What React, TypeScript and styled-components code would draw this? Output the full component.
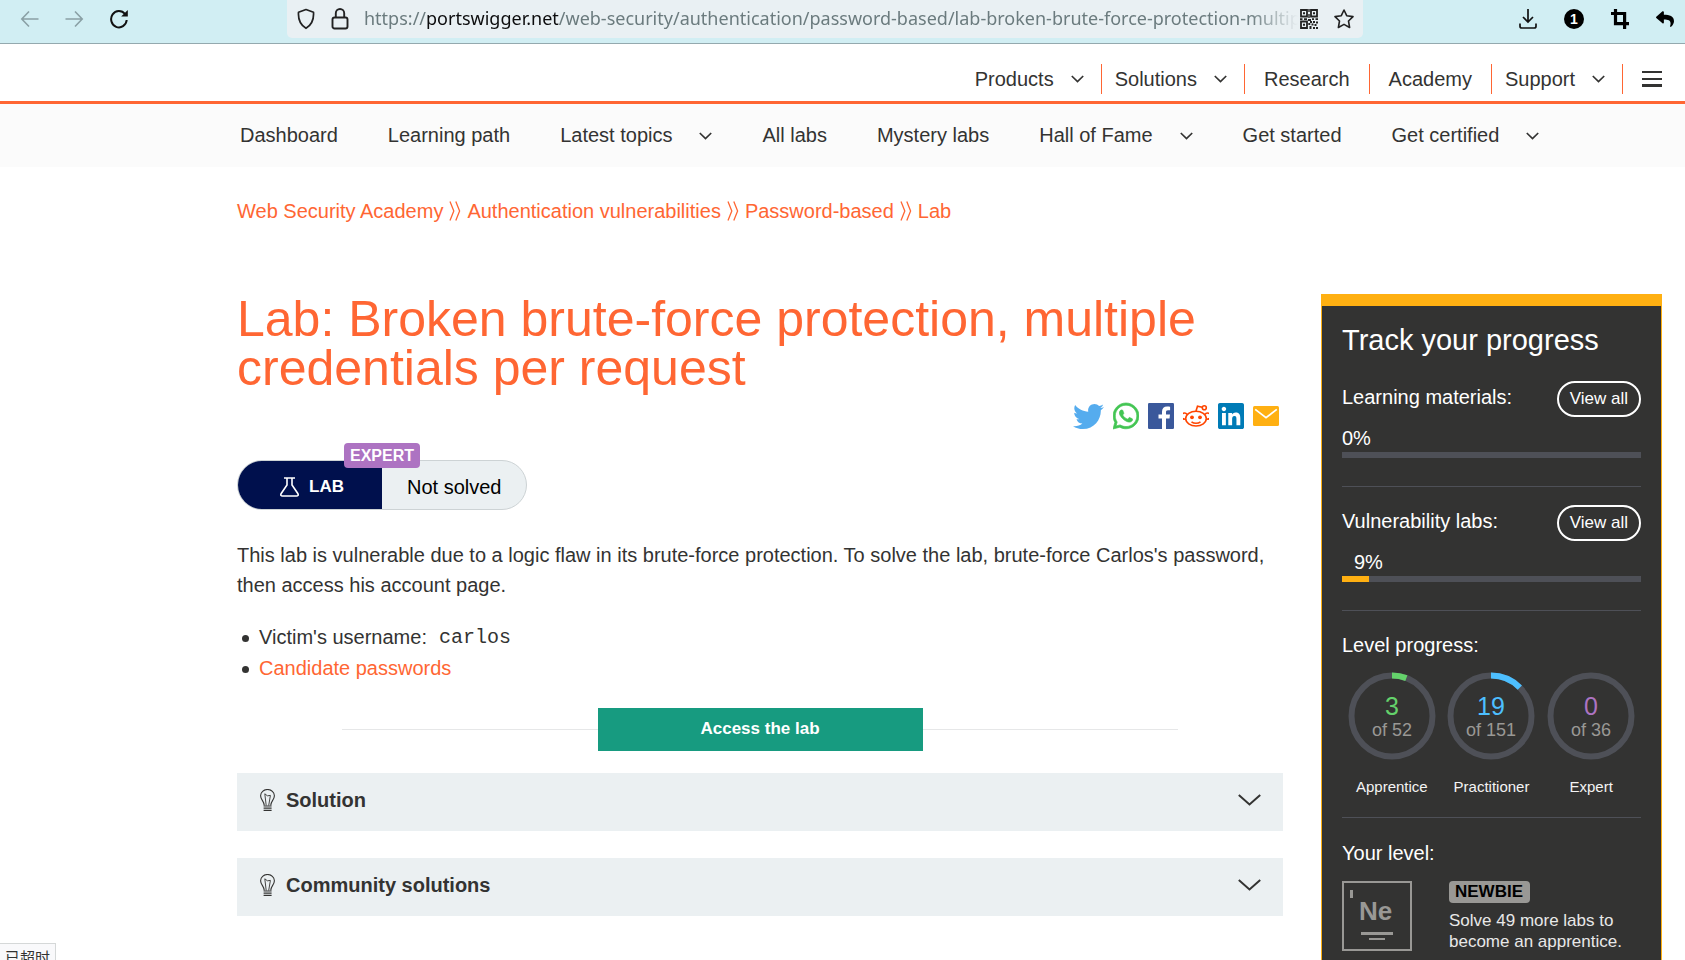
import React from "react";
import styled, { createGlobalStyle } from "styled-components";
import { FaTwitter, FaWhatsapp, FaLinkedin, FaReply } from "react-icons/fa";

const ORANGE = "#ff6633";
const AMBER = "#ffb012";
const INK = "#333332";
const PALE = "#ebf0f2";
const TRACK = "#4e5057";

const GlobalStyle = createGlobalStyle`
  *, *::before, *::after { box-sizing: border-box; }
  html, body, #root { height: 100%; }
  body {
    margin: 0;
    overflow: hidden;
    background: #fff;
    color: ${INK};
    font-family: "Liberation Sans", Arial, sans-serif;
    font-size: 20px;
  }
  a { color: inherit; text-decoration: none; }
  button { font: inherit; color: inherit; cursor: pointer; }
  svg { display: block; flex: none; }
  h1, h2, h3, p, ul { margin: 0; padding: 0; font-weight: 400; }
`;

const Page = styled.div`
  display: flex;
  flex-direction: column;
  min-height: 100%;
`;

/* Browser chrome */

const BrowserBar = styled.div`
  display: flex;
  height: 44px;
  padding: 0 11px 0 20px;
  background: #d1eef3;
  border-bottom: 1px solid #94a9ae;
`;

const ChromeGroup = styled.div<{ $gap: number }>`
  display: flex;
  align-items: center;
  gap: ${(p) => p.$gap}px;
  height: 38px;
`;

const IconButton = styled.button`
  display: flex;
  padding: 0;
  border: 0;
  background: none;
  color: #111;
  &:disabled { color: #8aa0a5; }
`;

const AddressBar = styled.div`
  flex: 1;
  min-width: 0;
  display: flex;
  align-items: center;
  gap: 16px;
  height: 38px;
  margin: 0 156px 0 159px;
  padding: 0 9px 0 10px;
  background: #e9f0f3;
  border-radius: 0 0 5px 5px;
`;

const Address = styled.div`
  flex: 1;
  min-width: 0;
  height: 38px;
  margin: 0 -14px 0 -1px;
  overflow: hidden;
  white-space: nowrap;
  font-family: "Noto Sans", "Open Sans", sans-serif;
  font-size: 18px;
  line-height: 36px;
  color: #6b7b7e;
  mask-image: linear-gradient(to left, transparent 0, #000 48px);
  strong { font-weight: 400; color: #0c0c0d; }
`;

/* Site header */

const Header = styled.header`
  display: flex;
  justify-content: flex-end;
  padding: 20px 23px 7px;
  border-bottom: 3px solid ${ORANGE};
`;

const TopItem = styled.div<{ $wide?: boolean }>`
  display: flex;
  align-items: center;
  gap: 17px;
  height: 30px;
  padding: 0 ${(p) => (p.$wide ? 19 : 17)}px 0 ${(p) => (p.$wide ? 19 : 13)}px;
  border-right: 1px solid ${ORANGE};
`;

const MenuButton = styled(IconButton)`
  align-items: center;
  margin-left: 19px;
  color: ${INK};
`;

const SubNav = styled.nav`
  display: flex;
  align-items: center;
  gap: 50px;
  height: 63px;
  padding: 0 23px 0 240px;
  background: #fbfbfb;
  white-space: nowrap;
`;

const SubItem = styled.div`
  display: flex;
  align-items: center;
  gap: 27px;
`;

const Crumbs = styled.nav`
  display: flex;
  align-items: center;
  gap: 6px;
  padding: 29px 23px 68px 237px;
  line-height: 30px;
  color: ${ORANGE};
`;

/* Page body */

const Body = styled.div`
  flex: 1;
  display: flex;
  gap: 38px;
  padding: 0 23px 0 237px;
`;

const Main = styled.main`
  flex: 1;
  min-width: 0;
`;

const Title = styled.h1`
  padding-top: 1px;
  font-size: 50px;
  line-height: 49px;
  color: ${ORANGE};
`;

const ShareRow = styled.div`
  display: flex;
  justify-content: flex-end;
  align-items: center;
  gap: 9px;
  height: 26px;
  margin-top: 10px;
  padding-right: 4px;
  color: #55acee;
`;

const WhatsAppLogo = styled(FaWhatsapp)`
  width: 26px;
  height: 30px;
  color: #43c553;
  stroke: currentColor;
  stroke-width: 12;
`;

const LinkedInLogo = styled(FaLinkedin)`
  width: 26px;
  height: 30px;
  color: #007bb6;
`;

const StatusPill = styled.div`
  position: relative;
  display: inline-flex;
  height: 50px;
  margin-top: 31px;
  border: 1px solid #cdd3d5;
  border-radius: 25px;
  background: ${PALE};
  color: #000;
  line-height: 52px;
`;

const PillLab = styled.span`
  display: flex;
  align-items: center;
  gap: 10px;
  width: 144px;
  padding: 4px 0 0 42px;
  border-radius: 24px 0 0 24px;
  background: #00104d;
  color: #fff;
  font-size: 17px;
  font-weight: 700;
`;

const PillState = styled.span`
  padding: 0 24px 0 25px;
`;

const Difficulty = styled.span`
  position: absolute;
  left: 106px;
  top: -18px;
  height: 25px;
  padding: 0 6px;
  border-radius: 4px;
  background: #ad73c2;
  color: #fff;
  font-size: 16px;
  font-weight: 700;
  line-height: 26px;
`;

const Paragraph = styled.p`
  margin-top: 30px;
  line-height: 30px;
`;

const List = styled.ul`
  margin-top: 22px;
  line-height: 31px;
  list-style: none;
`;

const ListItem = styled.li`
  display: flex;
  align-items: center;
  &::before {
    content: "";
    width: 7px;
    height: 7px;
    margin: 2px 10px 0 5px;
    border-radius: 50%;
    background: ${INK};
  }
`;

const Code = styled.code`
  margin-left: 12px;
  font-family: "Liberation Mono", "Courier New", monospace;
  font-size: 20px;
`;

const LabLink = styled.a`
  color: ${ORANGE};
`;

const Launch = styled.div`
  display: flex;
  align-items: center;
  width: 80%;
  margin: 24px auto 22px;
  &::before, &::after {
    content: "";
    flex: 1;
    height: 1px;
    background: #e6e7e8;
  }
`;

const LaunchButton = styled.a`
  width: 325px;
  height: 43px;
  background: #179b80;
  color: #fff;
  font-size: 17px;
  font-weight: 700;
  line-height: 42px;
  text-align: center;
`;

const Accordion = styled.button`
  display: flex;
  align-items: center;
  gap: 11px;
  width: 100%;
  height: 58px;
  margin-bottom: 27px;
  padding: 0 22px 4px 23px;
  border: 0;
  background: ${PALE};
  font-weight: 700;
  text-align: left;
  span { flex: 1; }
`;

/* Progress panel */

const Panel = styled.aside`
  width: 341px;
  padding: 18px 20px 0;
  background: ${INK};
  border: 1px solid ${AMBER};
  border-top-width: 12px;
  border-bottom: 0;
  color: #fff;
`;

const PanelTitle = styled.h2`
  margin-bottom: 25px;
  font-size: 29px;
  line-height: 32px;
  white-space: nowrap;
`;

const PanelSection = styled.section`
  margin-bottom: 18px;
  padding-bottom: 28px;
  border-bottom: 1px solid ${TRACK};
`;

const PanelHeading = styled.h3`
  font-size: 20px;
  line-height: 24px;
`;

const SectionHead = styled.div`
  display: flex;
  align-items: flex-start;
  justify-content: space-between;
  ${PanelHeading} { line-height: 33px; }
`;

const ViewAll = styled.a`
  height: 36px;
  padding: 0 11px;
  border: 2px solid #fff;
  border-radius: 18px;
  font-size: 17px;
  line-height: 32px;
`;

const Percent = styled.div<{ $indent?: boolean }>`
  margin: 9px 0 2px;
  padding-left: ${(p) => (p.$indent ? 12 : 0)}px;
  line-height: 24px;
`;

const Bar = styled.div`
  height: 6px;
  background: ${TRACK};
`;

const BarFill = styled.div`
  height: 6px;
  background: ${AMBER};
`;

const LevelSection = styled.section`
  margin-bottom: 23px;
  padding: 4px 0 20px;
  border-bottom: 1px solid ${TRACK};
`;

const Rings = styled.div`
  display: grid;
  grid-template-columns: repeat(3, 1fr);
  margin-top: 15px;
`;

const Ring = styled.div`
  display: flex;
  flex-direction: column;
  align-items: center;
  gap: 17px;
  font-size: 15px;
  line-height: 20px;
  color: #f4f4f4;
`;

const Level = styled.div`
  display: flex;
  align-items: flex-start;
  gap: 37px;
  margin-top: 16px;
`;

const LevelBadge = styled.div`
  width: max-content;
  padding: 0 7px 0 6px;
  border-radius: 4px;
  background: #999895;
  color: #000;
  font-size: 17px;
  font-weight: 700;
  line-height: 22px;
`;

const LevelText = styled.p`
  margin-top: 7px;
  font-size: 17px;
  line-height: 21px;
  color: #e8e8e8;
  white-space: nowrap;
`;

const LinkStatus = styled.div`
  position: fixed;
  left: 0;
  bottom: 0;
  height: 17px;
  padding: 0 5px;
  overflow: hidden;
  background: #f9f9fb;
  border: 1px solid #d5d8d8;
  border-width: 1px 1px 0 0;
  font-family: "Noto Sans CJK SC", sans-serif;
  font-size: 15px;
  line-height: 25px;
`;

const Caret = () => (
  <svg width="13" height="8" viewBox="0 0 13 8" fill="none" stroke={INK} strokeWidth="1.7" aria-hidden="true">
    <path d="M.8 1l5.7 5.6L12.200 1" />
  </svg>
);

const WideCaret = () => (
  <svg width="23" height="12" viewBox="0 0 23 12" fill="none" stroke={INK} strokeWidth="2" aria-hidden="true">
    <path d="M.8 1l10.700 9.500L22.200 1" />
  </svg>
);

const CrumbMark = () => (
  <svg width="12" height="20" viewBox="0 0 12 20" fill="none" stroke={ORANGE} strokeWidth="1.300" aria-hidden="true">
    <path d="M1 .5l3.800 9.500L1 19.500M6.800 .5l3.800 9.500-3.800 9.500" />
  </svg>
);

const Bulb = () => (
  <svg width="15" height="22" viewBox="0 0 15 22" fill="none" stroke={INK} strokeWidth="1.100" aria-hidden="true">
    <path d="M4.300 16.500C4.300 12.500.6 10.800.6 6.700a6.900 6.200 0 0 1 13.800 0c0 4.100-3.700 5.800-3.700 9.800" />
    <path d="M6.200 16.500L4.800 4.800l2.600 2 3-.4-1.700 10.100" strokeWidth=".9" />
    <path d="M3.600 17h8M3.600 19.200h8M3.600 21.300h8" strokeWidth="1.200" />
  </svg>
);

const Flask = () => (
  <svg width="19" height="20" viewBox="0 0 19 20" fill="none" stroke="#fff" strokeWidth="1.600" aria-hidden="true">
    <path d="M4 1h11M7 1v7L1.200 16.500c-.9 1.500-.2 2.500 1.300 2.500h14c1.500 0 2.200-1 1.300-2.500L12 8V1" />
  </svg>
);

const QrIcon = () => (
  <svg width="18" height="20" viewBox="0 0 18 20" aria-hidden="true">
    <g fill="none" stroke="#222" strokeWidth="1.800">
      <path d="M1 1h6v6.500H1zM11 1h6v6.500h-6zM1 12.500h6V19H1z" />
    </g>
    <path
      fill="#222"
      d="M3 3.300h2v2H3zM13 3.300h2v2h-2zM3 14.700h2v2H3zM8.300 0h1.400v3H8.300zM8.300 5h1.400v4H8.300zM0 9.200h2.500V11H0zM4 9.200h3V11H4zM8 10h3v2H8zM12 9.200h2V11h-2zM15.500 9.200H18V11h-2.500zM10 12h2v2h-2zM13 12h2v2h-2zM16 12.500h2v2h-2zM8.300 14h2v2h-2zM11.500 14.500h2v2h-2zM14.500 15h2v2h-2zM9.500 17h2v3h-2zM13 18h2v2h-2zM16 18h2v2h-2z"
    />
  </svg>
);

const FacebookIcon = () => (
  <svg width="26" height="26" viewBox="0 0 26 26" aria-hidden="true">
    <rect width="26" height="26" rx="1.200" fill="#3a589b" />
    <path fill="#fff" d="M14 26V15.600h-3.500v-4H14V8.700c0-3.400 2-5.200 5.100-5.200 1.500 0 2.600.1 3 .2v3.600h-2.100c-1.600 0-2 .8-2 2v2.300h4l-.5 4H18V26z" />
  </svg>
);

const RedditIcon = () => (
  <svg width="26" height="22" viewBox="0 0 26 22" fill="none" stroke="#ff4500" strokeWidth="1.600" aria-hidden="true">
    <ellipse cx="13" cy="13.600" rx="10.300" ry="7.400" />
    <path d="M4 9.500a3 3 0 1 0-2 4.500M22 9.500a3 3 0 1 1 2 4.500M13 6l1.500-4.800 4.800 1.100" />
    <circle cx="21.300" cy="2.800" r="2" />
    <path d="M8.500 16.800c2.500 2 6.500 2 9 0" />
    <g fill="#ff4500" stroke="none">
      <circle cx="9" cy="12.300" r="1.900" />
      <circle cx="17" cy="12.300" r="1.900" />
    </g>
  </svg>
);

const MailIcon = () => (
  <svg width="26" height="20" viewBox="0 0 26 20" aria-hidden="true">
    <rect width="26" height="20" rx="1.500" fill={AMBER} />
    <path d="M2.200 3.400L13 11.600l10.800-8.200" fill="none" stroke="#fff" strokeWidth="1.800" />
  </svg>
);

const NewbieTile = () => (
  <svg width="70" height="70" viewBox="0 0 70 70" role="img" aria-label="Newbie level">
    <rect x="1" y="1" width="68" height="68" fill="none" stroke="#999895" strokeWidth="2" />
    <g fill="#999895">
      <rect x="8" y="9" width="3" height="8" />
      <rect x="19" y="51" width="32" height="3" />
      <rect x="27" y="57" width="16" height="2" />
      <text x="17" y="39" fontFamily="Liberation Sans Narrow, Liberation Sans" fontSize="26" fontWeight="700">
        Ne
      </text>
    </g>
  </svg>
);

type RingProps = { label: string; done: number; total: number; color: string };

const LevelRing = ({ label, done, total, color }: RingProps) => {
  const radius = 40.5;
  const length = 2 * Math.PI * radius;
  return (
    <Ring>
      <svg width="88" height="88" viewBox="0 0 88 88" role="img" aria-label={`${done} of ${total}`}>
        <g fill="none" strokeWidth="6" transform="rotate(-90 44 44)">
          <circle cx="44" cy="44" r={radius} stroke={TRACK} />
          {done > 0 && (
            <circle cx="44" cy="44" r={radius} stroke={color} strokeDasharray={`${(length * done) / total} ${length}`} />
          )}
        </g>
        <g textAnchor="middle" fontFamily="Liberation Sans, Arial, sans-serif">
          <text x="44" y="43" fontSize="25" fill={color}>{done}</text>
          <text x="44" y="64" fontSize="18" fill="#999895">of {total}</text>
        </g>
      </svg>
      {label}
    </Ring>
  );
};

const topItems = [
  { label: "Products", menu: true },
  { label: "Solutions", menu: true },
  { label: "Research", menu: false },
  { label: "Academy", menu: false },
  { label: "Support", menu: true },
];

const subItems = [
  { label: "Dashboard" },
  { label: "Learning path" },
  { label: "Latest topics", menu: true },
  { label: "All labs" },
  { label: "Mystery labs" },
  { label: "Hall of Fame", menu: true },
  { label: "Get started" },
  { label: "Get certified", menu: true },
];

const crumbs = ["Web Security Academy", "Authentication vulnerabilities", "Password-based", "Lab"];

export default function App() {
  return (
    <Page>
      <GlobalStyle />
      <BrowserBar>
        <ChromeGroup $gap={26}>
          <IconButton disabled aria-label="Back">
            <svg width="19" height="18" viewBox="0 0 19 18" fill="none" stroke="currentColor" strokeWidth="1.600">
              <path d="M18.500 9H2M9 1.500L1.800 9 9 16.500" />
            </svg>
          </IconButton>
          <IconButton disabled aria-label="Forward">
            <svg width="19" height="18" viewBox="0 0 19 18" fill="none" stroke="currentColor" strokeWidth="1.600">
              <path d="M.5 9H17M10 1.500L17.200 9 10 16.500" />
            </svg>
          </IconButton>
          <IconButton aria-label="Reload">
            <svg width="18" height="20" viewBox="0 0 18 20" fill="none" stroke="currentColor" strokeWidth="2">
              <path d="M15 5A7.800 8.200 0 1 0 16.700 11" />
              <path d="M17.800 1v6.500h-6.600z" fill="currentColor" stroke="none" />
            </svg>
          </IconButton>
        </ChromeGroup>
        <AddressBar>
          <IconButton aria-label="Site protection">
            <svg width="18" height="22" viewBox="0 0 18 22" fill="none" stroke="#222" strokeWidth="1.700" strokeLinejoin="round">
              <path d="M9 1.500l7.500 2.800C17 11.500 14.500 17 9 20.300 3.500 17 1 11.500 1.500 4.300z" />
            </svg>
          </IconButton>
          <IconButton aria-label="Connection secure">
            <svg width="18" height="22" viewBox="0 0 18 22" fill="none" stroke="#222" strokeWidth="1.900">
              <rect x="1.500" y="9.500" width="15" height="11" rx="2" />
              <path d="M4.800 9.500V5.200a4.200 4.200 0 0 1 8.400 0v4.300" />
            </svg>
          </IconButton>
          <Address role="textbox" aria-label="Address">
            https://<strong>portswigger.net</strong>
            /web-security/authentication/password-based/lab-broken-brute-force-protection-multip
          </Address>
          <IconButton aria-label="QR code">
            <QrIcon />
          </IconButton>
          <IconButton aria-label="Bookmark">
            <svg width="20" height="20" viewBox="0 0 20 20" fill="none" stroke="#222" strokeWidth="1.600" strokeLinejoin="round">
              <path d="M10 1l2.700 5.700 6.300.9-4.500 4.400 1.100 6.500L10 15.400 4.400 18.500 5.500 12 1 7.600l6.300-.9z" />
            </svg>
          </IconButton>
        </AddressBar>
        <ChromeGroup $gap={27}>
          <IconButton aria-label="Downloads">
            <svg width="18" height="20" viewBox="0 0 18 20" fill="none" stroke="currentColor" strokeWidth="1.700">
              <path d="M9 0v12.500M4 8l5 5 5-5M1 14.500v2.700c0 1 .8 1.800 1.800 1.800h12.400c1 0 1.800-.8 1.800-1.800v-2.700" />
            </svg>
          </IconButton>
          <IconButton aria-label="Extension, 1 notification">
            <svg width="20" height="20" viewBox="0 0 20 20">
              <circle cx="10" cy="10" r="10" fill="#000" />
              <text x="10" y="15" textAnchor="middle" fontFamily="Liberation Sans" fontSize="14" fontWeight="700" fill="#fff">
                1
              </text>
            </svg>
          </IconButton>
          <IconButton aria-label="Crop">
            <svg width="18" height="20" viewBox="0 0 18 20" fill="none" stroke="#000" strokeWidth="3.200">
              <path d="M0 4.500h13.600V20M4.500 0v14.700H18" />
            </svg>
          </IconButton>
          <IconButton aria-label="Undo">
            <FaReply size={18} color="#000" />
          </IconButton>
        </ChromeGroup>
      </BrowserBar>

      <Header>
        {topItems.map((item) => (
          <TopItem key={item.label} $wide={!item.menu}>
            <a href="#">{item.label}</a>
            {item.menu && <Caret />}
          </TopItem>
        ))}
        <MenuButton aria-label="Menu">
          <svg width="20" height="16" viewBox="0 0 20 16" fill={INK}>
            <path d="M0 0h20v2H0zM0 7h20v2H0zM0 13h20v3H0z" />
          </svg>
        </MenuButton>
      </Header>

      <SubNav>
        {subItems.map((item) => (
          <SubItem key={item.label}>
            <a href="#">{item.label}</a>
            {item.menu && <Caret />}
          </SubItem>
        ))}
      </SubNav>

      <Crumbs aria-label="Breadcrumb">
        {crumbs.map((crumb, i) => (
          <React.Fragment key={crumb}>
            {i > 0 && <CrumbMark />}
            <a href="#">{crumb}</a>
          </React.Fragment>
        ))}
      </Crumbs>

      <Body>
        <Main>
          <Title>Lab: Broken brute-force protection, multiple credentials per request</Title>
          <ShareRow>
            <a href="#" aria-label="Twitter"><FaTwitter size={31} /></a>
            <a href="#" aria-label="WhatsApp"><WhatsAppLogo /></a>
            <a href="#" aria-label="Facebook"><FacebookIcon /></a>
            <a href="#" aria-label="Reddit"><RedditIcon /></a>
            <a href="#" aria-label="LinkedIn"><LinkedInLogo /></a>
            <a href="#" aria-label="Email"><MailIcon /></a>
          </ShareRow>
          <StatusPill>
            <PillLab>
              <Flask />
              LAB
            </PillLab>
            <PillState>Not solved</PillState>
            <Difficulty>EXPERT</Difficulty>
          </StatusPill>
          <Paragraph>
            This lab is vulnerable due to a logic flaw in its brute-force protection. To solve the lab, brute-force
            Carlos's password, then access his account page.
          </Paragraph>
          <List>
            <ListItem>
              Victim's username: <Code>carlos</Code>
            </ListItem>
            <ListItem>
              <LabLink href="#">Candidate passwords</LabLink>
            </ListItem>
          </List>
          <Launch>
            <LaunchButton href="#">Access the lab</LaunchButton>
          </Launch>
          {["Solution", "Community solutions"].map((label) => (
            <Accordion key={label} aria-expanded={false}>
              <Bulb />
              <span>{label}</span>
              <WideCaret />
            </Accordion>
          ))}
        </Main>

        <Panel>
          <PanelTitle>Track your progress</PanelTitle>
          <PanelSection>
            <SectionHead>
              <PanelHeading>Learning materials:</PanelHeading>
              <ViewAll href="#">View all</ViewAll>
            </SectionHead>
            <Percent>0%</Percent>
            <Bar />
          </PanelSection>
          <PanelSection>
            <SectionHead>
              <PanelHeading>Vulnerability labs:</PanelHeading>
              <ViewAll href="#">View all</ViewAll>
            </SectionHead>
            <Percent $indent>9%</Percent>
            <Bar>
              <BarFill style={{ width: "9%" }} />
            </Bar>
          </PanelSection>
          <LevelSection>
            <PanelHeading>Level progress:</PanelHeading>
            <Rings>
              <LevelRing label="Apprentice" done={3} total={52} color="#64d26b" />
              <LevelRing label="Practitioner" done={19} total={151} color="#4dbfff" />
              <LevelRing label="Expert" done={0} total={36} color="#ad73c2" />
            </Rings>
          </LevelSection>
          <PanelHeading>Your level:</PanelHeading>
          <Level>
            <NewbieTile />
            <div>
              <LevelBadge>NEWBIE</LevelBadge>
              <LevelText>
                Solve 49 more labs to
                <br />
                become an apprentice.
              </LevelText>
            </div>
          </Level>
        </Panel>
      </Body>
      <LinkStatus>已超时</LinkStatus>
    </Page>
  );
}
